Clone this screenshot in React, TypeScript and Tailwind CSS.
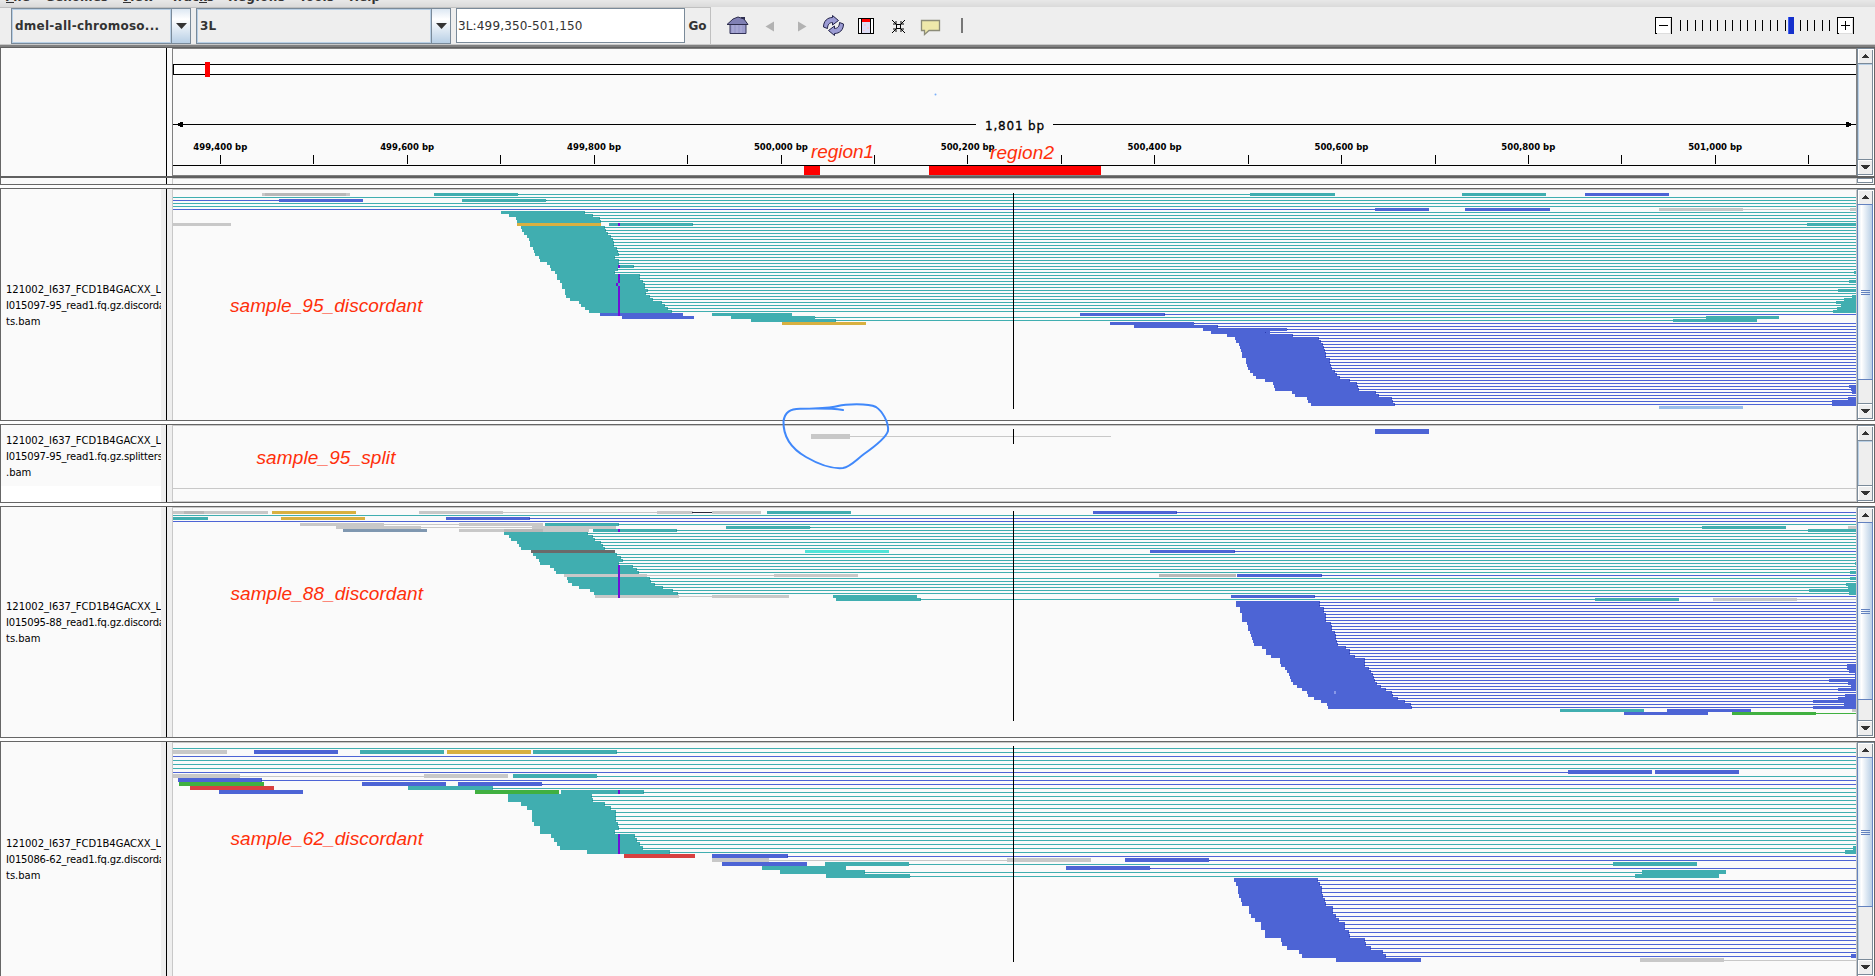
import React from "react";

const COLORS: Record<string, string> = {
  t: "#40aeb0",
  b: "#4d64d5",
  g: "#c8c8c8",
  d: "#b8b8b8",
  y: "#d8b040",
  n: "#40b040",
  r: "#d84040",
  s: "#7f97b0",
  k: "#6a6a6a",
  c: "#4fe4d8",
  l: "#98bdea",
  p: "#7010d8",
  x: "#2a2a3a",
  w: "#fafafa",
};
const JOIN: Record<string, string> = { t: "#2a8a8c", b: "#2c3cb0" };

// Right edge of the alignment viewport.
const END = 1856;

// Upper-case key: a read; lower-case key: the line joining a pair.
type Row = string;

function stairs(color: "t" | "b", steps: number[][]): Row[] {
  return steps.map(([l, r, e]) => {
    const up = color.toUpperCase();
    return `${up}${l}-${r} ${color}${r - 1}-${END}` + (e ? ` ${up}${e}-${END}` : "");
  });
}

const sample95: Row[] = [
  "G262-350 D265-346 T434-518 t518-1250 T1250-1335 T1462-1546 B1585-1669",
  "t173-1856",
  "b173-279 B279-363 T462-546 t546-1856",
  "t173-1856",
  "t173-1856",
  "b173-1375 B1375-1429 B1465-1550 G1659-1743 g1743-1850 G1850-1856",
  ...stairs("t", [[501, 585], [509, 593], [516, 600], [517, 601]]),
  "G173-231 Y517-601 T609-693 P618-620 t692-1807 T1807-1856",
  ...stairs("t", [
    [521, 605], [522, 606], [524, 608], [527, 611], [529, 613], [530, 614], [530, 614],
    [533, 617], [534, 618], [535, 619], [539, 615], [540, 619], [547, 619], [550, 634],
    [551, 618], [555, 615, 1854], [557, 640], [557, 640], [560, 643, 1849], [562, 645],
    [562, 645], [565, 648, 1838], [565, 646], [566, 650, 1852], [570, 653, 1844],
    [579, 662, 1836], [581, 665, 1841], [585, 668, 1837], [589, 672, 1833],
  ]),
  "B600-683 T712-792 B1080-1165 b1164-1856",
  "B622-694 T731-815 t815-1706 T1706-1779",
  "T751-836 t835-1673 T1673-1757",
  "Y782-866 B1110-1194 b1194-1856",
  "B1134-1218 b1217-1856",
  "B1203-1287 b1287-1856",
  "B1211-1270 b1265-1856",
  ...stairs("b", [
    [1227, 1293], [1235, 1319], [1236, 1321], [1239, 1323], [1240, 1324], [1241, 1325],
    [1242, 1326], [1242, 1326], [1246, 1330], [1246, 1330], [1247, 1331], [1248, 1332],
    [1250, 1335], [1253, 1337], [1256, 1340], [1265, 1350], [1273, 1357],
    [1274, 1358, 1849], [1275, 1359, 1851], [1292, 1376, 1852], [1295, 1379],
    [1307, 1392, 1848], [1308, 1393, 1832], [1311, 1395, 1832],
  ]),
  "L1659-1743",
];

const sample88: Row[] = [
  "G173-268 D184-204 Y272-356 G419-503 g503-657 G657-693 x692-712 G712-761 T767-851 B1093-1177 b1176-1856",
  "t173-1856",
  "T173-208 Y281-365 B446-530 b529-1856",
  "b173-1856",
  "G300-384 g384-459 G459-543 T545-619 t618-1856",
  "G336-421 g421-532 G532-616 T726-810 t810-1702 T1702-1786 G1848-1856",
  "S343-427 G459-589 D504-543 T593-677 P618-620 t676-1808 T1808-1856",
  ...stairs("t", [[504, 588], [509, 593], [511, 595], [517, 601], [519, 603], [521, 605]]),
  "K531-615 C805-889 B1150-1235 b1234-1856",
  ...stairs("t", [
    [533, 617], [536, 621], [539, 623], [540, 619, 1855], [550, 633], [554, 637],
    [556, 639, 1850],
  ]),
  "G564-647 g647-774 G774-858 D1159-1236 B1237-1322 b1321-1856",
  ...stairs("t", [
    [567, 650, 1850], [568, 651], [572, 655, 1846], [579, 663, 1848], [590, 673, 1809],
    [594, 678, 1849],
  ]),
  "G595-679 g679-712 G712-789 T833-917 B1231-1315 b1314-1856",
  "T836-921 t920-1595 T1595-1679 G1713-1797 g1797-1856",
  ...stairs("b", [
    [1236, 1320], [1236, 1320], [1240, 1324], [1240, 1324], [1242, 1326], [1242, 1326],
    [1242, 1326], [1247, 1331], [1248, 1332], [1248, 1332], [1250, 1335], [1251, 1336],
    [1252, 1336], [1253, 1337], [1254, 1338], [1262, 1346], [1266, 1350], [1266, 1350],
    [1271, 1355], [1280, 1365], [1280, 1365], [1281, 1365, 1847], [1285, 1369, 1847],
    [1287, 1371, 1849], [1289, 1373, 1855], [1290, 1374, 1855], [1291, 1375, 1829],
    [1293, 1377, 1848], [1297, 1381, 1851], [1302, 1386, 1838], [1307, 1392],
    [1308, 1393, 1845], [1314, 1398, 1838], [1321, 1405, 1813], [1327, 1411, 1844],
    [1328, 1412, 1813],
  ]),
  "T1560-1644 B1667-1751 G1852-1856",
  "B1624-1708 N1732-1816 n1815-1856",
];

const sample62: Row[] = [
  "t173-1856",
  "G173-227 B254-338 T360-444 Y447-531 T533-617 t616-1856",
  "b173-1856",
  "t173-1856",
  "t173-1856",
  "t173-1856",
  "b173-1568 B1568-1652 B1655-1739",
  "G173-240 g240-424 G424-508 T513-597 t597-1856",
  "B178-262 b261-1856",
  "N179-264 B362-446 B458-542 b542-1856",
  "R190-274 T408-493 t492-1856",
  "B219-303 N475-559 T561-644 P618-620 t643-1856",
  ...stairs("t", [
    [508, 592], [508, 593], [521, 605], [527, 611], [532, 616], [532, 616], [532, 616],
    [534, 618], [540, 619], [540, 615], [551, 635], [554, 637], [557, 640],
    [560, 643, 1853], [587, 670, 1845],
  ]),
  "R624-695 B712-788 b787-1856",
  "G712-769 g769-1007 G1007-1091 B1125-1209 b1209-1856",
  "B722-807 T825-909 t909-1613 T1613-1697",
  "T762-846 B1066-1150 b1150-1856",
  "T780-865 t864-1642 T1642-1726",
  "T826-910 t910-1635 T1635-1719",
  ...stairs("b", [
    [1234, 1318], [1236, 1320], [1238, 1322], [1238, 1322], [1239, 1323], [1241, 1325],
    [1242, 1326], [1249, 1333], [1249, 1333], [1251, 1336], [1255, 1339], [1261, 1345],
    [1261, 1345], [1265, 1349], [1265, 1350], [1281, 1365], [1282, 1366], [1287, 1371],
    [1299, 1383], [1302, 1386, 1851],
  ]),
  "B1336-1421 G1640-1724 g1724-1856",
];

function Reads({ rows, y, pitch }: { rows: Row[]; y: number; pitch: number }) {
  return (
    <>
      {rows.map((row, i) =>
        row.split(" ").map((seg, j) => {
          const key = seg[0];
          const [a, b] = seg.slice(1).split("-").map(Number);
          const low = key.toLowerCase();
          const top = y + i * pitch;
          if (key === low) {
            const mid = top + Math.floor(pitch / 2);
            return (
              <g key={j}>
                <rect x={a} y={mid} width={b - a} height={1} fill={COLORS[low]} />
                {JOIN[low] && a > 173 && (
                  <rect x={a} y={mid} width={1} height={1} fill={JOIN[low]} />
                )}
              </g>
            );
          }
          return <rect key={j} x={a} y={top} width={b - a} height={pitch} fill={COLORS[low]} />;
        })
      )}
    </>
  );
}

function Insertion({ y1, y2 }: { y1: number; y2: number }) {
  return <rect x={618} y={y1} width={2} height={y2 - y1} fill={COLORS.p} />;
}

function Arrow({ up = false }: { up?: boolean }) {
  return (
    <svg width="9" height="4" viewBox="0 0 9 4" shapeRendering="crispEdges" className="block">
      {up ? (
        <path d="M4 0h1v1h1v1h1v1h1v1H1V3h1V2h1V1h1z" fill="#333" />
      ) : (
        <path d="M0 0h9v1H8v1H7v1H6v1H3V3H2V2H1V1H0z" fill="#333" />
      )}
    </svg>
  );
}

function Scrollbar({ thumb = 0 }: { thumb?: number }) {
  return (
    <div className="flex w-[17px] shrink-0 flex-col border-l border-t border-[#7a8a99] bg-white">
      <div className="ml-px mt-px mr-px flex h-[13px] shrink-0 items-center justify-center border-r border-[#7a8a99] bg-[#eeeeee] pb-px">
        <Arrow up />
      </div>
      <div className="mr-px flex flex-1 flex-col border-r border-t border-[#7a8a99] bg-[#eeeeee]">
        {thumb > 0 ? (
          <div
            className="-mt-px -ml-px -mr-px flex shrink-0 flex-col items-center justify-center gap-px border border-[#6382bf] bg-linear-to-r from-[#dce8f3] via-[#ffffff] via-25% to-[#b8cfe5]"
            style={{ height: thumb }}
          >
            <div className="h-px w-[9px] bg-[#6382bf]" />
            <div className="h-px w-[9px] bg-[#6382bf]" />
            <div className="h-px w-[9px] bg-[#6382bf]" />
          </div>
        ) : (
          <div className="h-px bg-[#b8cfe5]" />
        )}
        <div className="w-px flex-1 bg-[#b8cfe5]" />
      </div>
      <div className="mb-px mr-px flex h-4 shrink-0 items-stretch border-b border-r border-t border-[#7a8a99] pl-px pt-px">
        <div className="flex flex-1 items-center justify-center bg-[#eeeeee] pb-px">
          <Arrow />
        </div>
      </div>
    </div>
  );
}

function TrackPanel({
  name,
  className,
  viewY,
  viewH,
  thumb,
  nameBox = "flex-1",
  children,
}: {
  name: string[];
  className: string;
  viewY: number;
  viewH: number;
  thumb?: number;
  nameBox?: string;
  children: React.ReactNode;
}) {
  return (
    <section className={`flex shrink-0 border-x border-t border-[#666] ${className}`}>
      <div className="flex w-40 shrink-0 flex-col overflow-hidden bg-white">
        <div
          className={`flex flex-col justify-center bg-[#fafafa] pt-0.5 pl-[5px] text-[10px] leading-4 whitespace-nowrap text-black ${nameBox}`}
        >
          {name.map((n, i) => (
            <div key={n} className={i === 1 ? "tracking-[-0.19px]" : "tracking-[-0.03px]"}>
              {n}
            </div>
          ))}
        </div>
      </div>
      <div className="w-[5px] shrink-0 bg-[#eeeeee]" />
      <div className="w-px shrink-0 bg-black" />
      <div className="w-[5px] shrink-0 bg-[#eeeeee]" />
      <div className="w-[1685px] shrink-0 border-x border-t border-[#c8c8c8] bg-[#fafafa]">
        <svg
          width="1683"
          height={viewH}
          viewBox={`173 ${viewY} 1683 ${viewH}`}
          shapeRendering="crispEdges"
          className="block"
        >
          {children}
        </svg>
      </div>
      <Scrollbar thumb={thumb} />
    </section>
  );
}

function Combo({ text, className }: { text: string; className: string }) {
  return (
    <div className={`flex h-9 shrink-0 border border-[#7a8a99] ${className}`}>
      <div className="flex flex-1 items-center border border-[#b8cfe5] bg-[#eeeeee] pl-[2px] text-[12px] font-bold tracking-[0.25px]">
        {text}
      </div>
      <div className="flex w-[19px] items-center justify-center border-l border-[#7a8a99] bg-linear-to-b from-[#dde8f3] via-white via-30% to-[#b8cfe5]">
        <svg width="11" height="6" viewBox="0 0 11 6">
          <path d="M0 0h11L5.5 6z" fill="#333" />
        </svg>
      </div>
    </div>
  );
}

const MENU: { x: number; w: number; label: string }[] = [
  { x: 5, w: 25, label: "File" },
  { x: 45, w: 63, label: "Genomes" },
  { x: 121, w: 33, label: "View" },
  { x: 171, w: 43, label: "Tracks" },
  { x: 228, w: 57, label: "Regions" },
  { x: 299, w: 35, label: "Tools" },
  { x: 349, w: 31, label: "Help" },
];

function MenuBar() {
  return (
    <svg width="1875" height="7" viewBox="0 0 1875 7" className="block shrink-0">
      <defs>
        <linearGradient id="menu" x1="0" y1="0" x2="0" y2="1">
          <stop offset="0" stopColor="#e8e8e8" />
          <stop offset="1" stopColor="#dadada" />
        </linearGradient>
      </defs>
      <rect width="1875" height="7" fill="url(#menu)" />
      {MENU.map((m) => (
        <text key={m.x} x={m.x} y="1" fontSize="12" fontWeight="bold" fill="#333" textLength={m.w}>
          {m.label}
        </text>
      ))}
      <path d="M6 2.5h8M123 2.5h8M199 2.5h8" stroke="#333" />
    </svg>
  );
}

function ToolIcons() {
  return (
    <svg width="250" height="36" viewBox="715 8 250 36" className="block shrink-0">
      <g>
        <path d="M741 17h4v6h-4z" fill="#2e2e50" />
        <path d="M730 24h16v9.5h-16z" fill="#9c9ccc" stroke="#333358" />
        <path d="M727 24.5 733 19l5-2 6 2 4 5.5z" fill="#8080b4" stroke="#2c2c4c" />
        <path d="M733 25v8M737 25v8M741 25v8" stroke="#b0b0da" />
      </g>
      <path d="M774 21.5v10l-8.500-5z" fill="#b2b2b2" />
      <path d="M798 21.500v10l8.500-5z" fill="#b2b2b2" />
      <g fill="#9c9cd4" stroke="#23234a" strokeWidth="1" strokeLinejoin="round">
        <path d="M823.500 27c0-6 4-9.500 9-9.500v-2l6 5-6 4.500v-2.500c-3 0-5 2-5 6z" />
        <path d="M843.500 24c0 6-4 9.500-9 9.500v2l-6-5 6-4.500v2.500c3 0 5-2 5-6z" />
      </g>
      <g shapeRendering="crispEdges">
        <rect x="858" y="18" width="16" height="16" fill="#000" />
        <rect x="859" y="19" width="2" height="14" fill="#fff" />
        <rect x="871" y="19" width="2" height="14" fill="#fff" />
        <rect x="862" y="19" width="8" height="14" fill="#dcdcf4" />
        <rect x="862" y="19" width="8" height="3" fill="#f00" />
        <path d="M864 24h2v2h-2zM867 27h2v2h-2zM863 30h2v1h-2z" fill="#f4c8d4" />
      </g>
      <g stroke="#000" fill="none" shapeRendering="crispEdges">
        <rect x="896.500" y="24.500" width="4" height="4" />
      </g>
      <g stroke="#000" fill="none">
        <path d="m892 20 4 4M905 20l-4 4M892 33l4-4M905 33l-4-4" />
        <path d="M893 24h3v-3M904 24h-3v-3M893 29h3v3M904 29h-3v3" />
      </g>
      <path
        d="M921.500 20.500h18v10H929l-4.500 4v-4h-3z"
        fill="#eee8aa"
        stroke="#8c8c78"
        strokeWidth="1.300"
      />
      <rect x="961" y="18" width="2" height="15" fill="#777" />
    </svg>
  );
}

function ZoomSlider() {
  return (
    <svg
      width="206"
      height="36"
      viewBox="1652 8 206 36"
      shapeRendering="crispEdges"
      className="block shrink-0"
    >
      <rect x="1655.500" y="17.500" width="16" height="16" fill="#fff" stroke="#000" />
      <path d="M1670.500 19v14h-14" stroke="#ddd" fill="none" />
      <path d="M1659 25.500h9" stroke="#000" />
      {Array.from({ length: 21 }, (_, i) => (
        <rect key={i} x={Math.round(1680 + i * 7.47)} y="20" width="1" height="11" fill="#000" />
      ))}
      <rect x="1788" y="17" width="6" height="17" fill="#1530cc" />
      <rect x="1788" y="17" width="1" height="17" fill="#4060f0" />
      <rect x="1837.500" y="17.500" width="16" height="16" fill="#fff" stroke="#000" />
      <path d="M1852.500 19v14h-14" stroke="#ddd" fill="none" />
      <path d="M1841 25.500h9M1845.500 21v9" stroke="#000" />
    </svg>
  );
}

const TICKS = [
  "499,400 bp",
  "499,600 bp",
  "499,800 bp",
  "500,000 bp",
  "500,200 bp",
  "500,400 bp",
  "500,600 bp",
  "500,800 bp",
  "501,000 bp",
];

function Ruler() {
  return (
    <svg
      width="1683"
      height="126"
      viewBox="173 49 1683 126"
      shapeRendering="crispEdges"
      className="block"
    >
      <rect x="173.500" y="64.500" width="1690" height="10" fill="#fff" stroke="#000" />
      <rect x="205" y="62" width="5" height="15" fill="#f00" />
      <rect x="173" y="124" width="803" height="1" fill="#000" />
      <rect x="1053" y="124" width="803" height="1" fill="#000" />
      <path d="M176 124h2v-1h2v-1h3v5h-3v-1h-2v-1h-2z" />
      <path d="M1853 124h-2v-1h-2v-1h-3v5h3v-1h2v-1h2z" />
      <text x="985" y="130" fontSize="12" textLength="59" stroke="#000" strokeWidth="0.300">
        1,801 bp
      </text>
      {TICKS.map((t, i) => (
        <text
          key={t}
          x={193.300 + i * 186.860}
          y="150"
          fontSize="9.500"
          fontWeight="bold"
          textLength="54"
          lengthAdjust="spacingAndGlyphs"
        >
          {t}
        </text>
      ))}
      {Array.from({ length: 18 }, (_, i) => (
        <rect key={i} x={Math.round(220 + i * 93.430)} y="155" width="1" height="9" />
      ))}
      <rect x="173" y="165" width="1683" height="1" />
      <rect x="804" y="166" width="16" height="9" fill="#f00" />
      <rect x="929" y="166" width="172" height="9" fill="#f00" />
    </svg>
  );
}

const NOTES = [
  { text: "region1", x: 811, y: 158, w: 63 },
  { text: "region2", x: 990, y: 159, w: 64 },
  { text: "sample_95_discordant", x: 230, y: 312, w: 192.5 },
  { text: "sample_95_split", x: 256.5, y: 463.5, w: 139 },
  { text: "sample_88_discordant", x: 230.5, y: 599.5, w: 192.5 },
  { text: "sample_62_discordant", x: 230.5, y: 844.5, w: 192.5 },
];

function Annotations() {
  return (
    <svg
      width="1875"
      height="976"
      viewBox="0 0 1875 976"
      className="pointer-events-none absolute top-0 left-0"
    >
      <g
        className="font-['Liberation_Sans',Arial,sans-serif]"
        fontSize="19"
        fontStyle="italic"
        fill="#ff2f0a"
      >
        {NOTES.map((n) => (
          <text key={n.text} x={n.x} y={n.y} textLength={n.w}>
            {n.text}
          </text>
        ))}
      </g>
      <path
        d="M843 410C830 408 812 408.500 800 408.800 790 409 785 412 783.500 421 783 437 792 449 806 457 818 464 832 469 843 468 850 467 856 460 864 454 874 447 886 438 888 431 889 422 882 411 876 407 868 403 845 404 838 406 832 408 824 408 806 408.800"
        fill="none"
        stroke="#4088fa"
        strokeWidth="2"
        strokeLinecap="round"
      />
      <circle cx="935.500" cy="94.500" r="1" fill="#7ab0fa" />
    </svg>
  );
}

export default function App() {
  return (
    <div className="relative flex h-[976px] w-[1875px] flex-col overflow-hidden bg-[#fdfdfd] font-['DejaVu_Sans',Verdana,sans-serif] text-[#333]">
      <MenuBar />

      <div className="flex h-[38px] shrink-0 items-start border-b border-[#c8c8c8] bg-[#eeeeee]">
        <div className="flex h-[37px] w-[711px] shrink-0 border-r border-t border-[#c0c0c0]">
          <Combo text="dmel-all-chromoso..." className="ml-[11px] w-[180px]" />
          <Combo text="3L" className="ml-[5px] w-[255px]" />
          <div className="ml-[5px] flex h-[35px] w-[229px] items-center border border-[#7a8a99] bg-white pl-px text-[12px] tracking-[0.15px]">
            3L:499,350-501,150
          </div>
          <div className="flex flex-1 items-center justify-center text-[12px] font-bold">Go</div>
        </div>
        <div className="flex flex-1 justify-between pt-px pr-[17px] pl-1">
          <ToolIcons />
          <ZoomSlider />
        </div>
      </div>
      <div className="h-0.5 shrink-0 bg-[#808080]" />
      <div className="h-px shrink-0 bg-[#606060]" />

      <section className="flex h-32 shrink-0 border-x border-[#666] bg-[#fafafa]">
        <div className="w-[165px] shrink-0" />
        <div className="w-px shrink-0 bg-black" />
        <div className="w-[5px] shrink-0" />
        <div className="w-[1685px] shrink-0 border border-[#808080]">
          <Ruler />
        </div>
        <Scrollbar />
      </section>
      <div className="h-0.5 shrink-0 bg-[#606060]" />
      <div className="flex h-[7px] shrink-0 border-x border-b border-[#666] bg-[#fafafa]">
        <div className="w-[165px] shrink-0" />
        <div className="w-px shrink-0 bg-black" />
        <div className="w-[5px] shrink-0" />
        <div className="w-[1685px] shrink-0 border-x border-t border-[#c8c8c8]" />
        <div className="mb-px mr-px flex-1 border border-[#7a8a99] bg-white" />
      </div>

      <div className="flex flex-col gap-[3px] pt-[3px]">
        <TrackPanel
          name={["121002_I637_FCD1B4GACXX_L", "I015097-95_read1.fq.gz.discordan", "ts.bam"]}
          className="h-[233px] border-b"
          viewY={190}
          viewH={230}
          thumb={176}
        >
          <Reads rows={sample95} y={193} pitch={3} />
          <Insertion y1={265} y2={268} />
          <Insertion y1={274} y2={283} />
          <rect x="616" y="283" width="2" height="3" fill={COLORS.p} />
          <Insertion y1={286} y2={316} />
          <rect x="1013" y="193" width="1" height="216" />
        </TrackPanel>

        <TrackPanel
          name={["121002_I637_FCD1B4GACXX_L", "I015097-95_read1.fq.gz.splitters", ".bam"]}
          className="h-[79px] border-b"
          nameBox="h-[61px]"
          viewY={426}
          viewH={76}
        >
          <rect x="811" y="434" width="39" height="5" fill="#c8c8c8" />
          <rect x="850" y="436" width="261" height="1" fill="#c8c8c8" />
          <rect x="1375" y="429" width="54" height="5" fill="#4d64d5" />
          <rect x="173" y="488" width="1683" height="1" fill="#c8c8c8" />
          <rect x="173" y="501" width="1683" height="1" fill="#c8c8c8" />
          <rect x="1013" y="429" width="1" height="15" />
        </TrackPanel>

        <TrackPanel
          name={["121002_I637_FCD1B4GACXX_L", "I015095-88_read1.fq.gz.discordan", "ts.bam"]}
          className="h-[232px] border-b"
          viewY={508}
          viewH={229}
          thumb={178}
        >
          <Reads rows={sample88} y={511} pitch={3} />
          <Insertion y1={565} y2={598} />
          <rect x="1334" y="691" width="2" height="3" fill="#8898e8" />
          <rect x="1013" y="511" width="1" height="210" />
        </TrackPanel>

        <TrackPanel
          name={["121002_I637_FCD1B4GACXX_L", "I015086-62_read1.fq.gz.discordan", "ts.bam"]}
          className="h-[235px]"
          viewY={743}
          viewH={233}
          thumb={150}
        >
          <Reads rows={sample62} y={746} pitch={4} />
          <Insertion y1={834} y2={854} />
          <rect x="1013" y="746" width="1" height="216" />
        </TrackPanel>
      </div>

      <Annotations />
    </div>
  );
}
